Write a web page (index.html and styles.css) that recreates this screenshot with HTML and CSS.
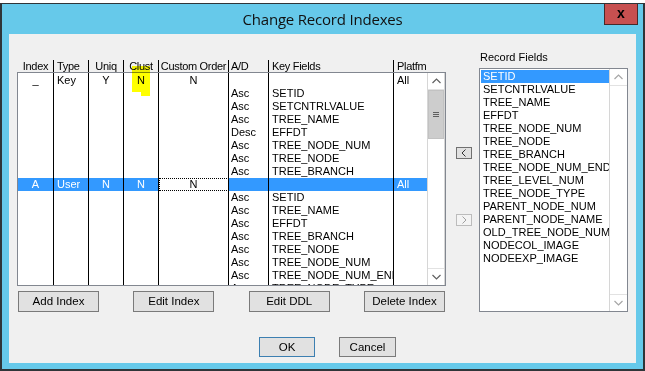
FILE: index.html
```html
<!DOCTYPE html>
<html>
<head>
<meta charset="utf-8">
<link rel="stylesheet" href="styles.css">
</head>
<body>
<div class="bgstrip"></div>
<div class="window">
  <div class="titlebar">
    <span class="title">Change Record Indexes</span>
    <div class="close">x</div>
  </div>
  <div class="content">
    <div class="main">
      <div class="leftcol">
        <div class="thead cols">
          <div class="c">Index</div><div class="l">Type</div><div class="c">Uniq</div><div class="c">Clust</div><div class="c">Custom Order</div><div class="l2">A/D</div><div class="l">Key Fields</div><div class="l last">Platfm</div>
        </div>
        <div class="tbox">
          <div class="tbody">
            <div class="row cols first"><div class="c">_</div><div class="l">Key</div><div class="c">Y</div><div class="c">N</div><div class="c">N</div><div class="l2"></div><div class="l"></div><div class="l">All</div></div>
            <div class="row cols"><div></div><div></div><div></div><div></div><div></div><div class="l2">Asc</div><div class="l">SETID</div><div></div></div>
            <div class="row cols"><div></div><div></div><div></div><div></div><div></div><div class="l2">Asc</div><div class="l">SETCNTRLVALUE</div><div></div></div>
            <div class="row cols"><div></div><div></div><div></div><div></div><div></div><div class="l2">Asc</div><div class="l">TREE_NAME</div><div></div></div>
            <div class="row cols"><div></div><div></div><div></div><div></div><div></div><div class="l2">Desc</div><div class="l">EFFDT</div><div></div></div>
            <div class="row cols"><div></div><div></div><div></div><div></div><div></div><div class="l2">Asc</div><div class="l">TREE_NODE_NUM</div><div></div></div>
            <div class="row cols"><div></div><div></div><div></div><div></div><div></div><div class="l2">Asc</div><div class="l">TREE_NODE</div><div></div></div>
            <div class="row cols"><div></div><div></div><div></div><div></div><div></div><div class="l2">Asc</div><div class="l">TREE_BRANCH</div><div></div></div>
            <div class="row cols sel"><div class="c">A</div><div class="l">User</div><div class="c">N</div><div class="c">N</div><div class="c focus">N</div><div class="l2"></div><div class="l"></div><div class="l">All</div></div>
            <div class="row cols"><div></div><div></div><div></div><div></div><div></div><div class="l2">Asc</div><div class="l">SETID</div><div></div></div>
            <div class="row cols"><div></div><div></div><div></div><div></div><div></div><div class="l2">Asc</div><div class="l">TREE_NAME</div><div></div></div>
            <div class="row cols"><div></div><div></div><div></div><div></div><div></div><div class="l2">Asc</div><div class="l">EFFDT</div><div></div></div>
            <div class="row cols"><div></div><div></div><div></div><div></div><div></div><div class="l2">Asc</div><div class="l">TREE_BRANCH</div><div></div></div>
            <div class="row cols"><div></div><div></div><div></div><div></div><div></div><div class="l2">Asc</div><div class="l">TREE_NODE</div><div></div></div>
            <div class="row cols"><div></div><div></div><div></div><div></div><div></div><div class="l2">Asc</div><div class="l">TREE_NODE_NUM</div><div></div></div>
            <div class="row cols"><div></div><div></div><div></div><div></div><div></div><div class="l2">Asc</div><div class="l">TREE_NODE_NUM_END</div><div></div></div>
            <div class="row cols"><div></div><div></div><div></div><div></div><div></div><div class="l2">Asc</div><div class="l">TREE_NODE_TYPE</div><div></div></div>
          </div>
          <div class="vscroll">
            <div class="sb-btn up"><svg width="9" height="6" viewBox="0 0 9 6"><polyline points="0.5,5 4.5,1 8.5,5" fill="none" stroke="#606060" stroke-width="1.2"/></svg></div>
            <div class="sb-thumb"><span class="grip"></span><span class="grip"></span><span class="grip"></span></div>
            <div class="sb-track"></div>
            <div class="sb-btn down"><svg width="9" height="6" viewBox="0 0 9 6"><polyline points="0.5,1 4.5,5 8.5,1" fill="none" stroke="#606060" stroke-width="1.2"/></svg></div>
          </div>
        </div>
        <div class="btnrow">
          <div class="btn">Add Index</div>
          <div class="btn">Edit Index</div>
          <div class="btn">Edit DDL</div>
          <div class="btn">Delete Index</div>
        </div>
        <div class="hl hl-a"></div>
        <div class="hl hl-b"></div>
      </div>
      <div class="midcol">
        <div class="arrowbtn"><svg width="6" height="8" viewBox="0 0 6 8"><polyline points="4.5,0.5 1,4 4.5,7.5" fill="none" stroke="#333" stroke-width="1"/></svg></div>
        <div class="arrowbtn disabled"><svg width="6" height="8" viewBox="0 0 6 8"><polyline points="1.5,0.5 5,4 1.5,7.5" fill="none" stroke="#a0a0a0" stroke-width="1"/></svg></div>
      </div>
      <div class="rightcol">
        <div class="rf-label">Record Fields</div>
        <div class="rf-box">
          <div class="rf-list">
            <div class="item sel">SETID</div>
            <div class="item">SETCNTRLVALUE</div>
            <div class="item">TREE_NAME</div>
            <div class="item">EFFDT</div>
            <div class="item">TREE_NODE_NUM</div>
            <div class="item">TREE_NODE</div>
            <div class="item">TREE_BRANCH</div>
            <div class="item">TREE_NODE_NUM_END</div>
            <div class="item">TREE_LEVEL_NUM</div>
            <div class="item">TREE_NODE_TYPE</div>
            <div class="item">PARENT_NODE_NUM</div>
            <div class="item">PARENT_NODE_NAME</div>
            <div class="item">OLD_TREE_NODE_NUM</div>
            <div class="item">NODECOL_IMAGE</div>
            <div class="item">NODEEXP_IMAGE</div>
          </div>
          <div class="vscroll rf">
            <div class="sb-btn up small"><svg width="9" height="6" viewBox="0 0 9 6"><polyline points="0.5,5 4.5,1 8.5,5" fill="none" stroke="#a6a6a6" stroke-width="1.2"/></svg></div>
            <div class="sb-track"></div>
            <div class="sb-btn down small"><svg width="9" height="6" viewBox="0 0 9 6"><polyline points="0.5,1 4.5,5 8.5,1" fill="none" stroke="#a6a6a6" stroke-width="1.2"/></svg></div>
          </div>
        </div>
      </div>
    </div>
    <div class="okrow">
      <div class="btn ok">OK</div>
      <div class="btn cancel">Cancel</div>
    </div>
  </div>
</div>
</body>
</html>
```

FILE: styles.css
```css
* { box-sizing: border-box; }
html, body { margin: 0; padding: 0; }
body {
  width: 645px;
  height: 371px;
  overflow: hidden;
  background: #ffffff;
  font-family: "Liberation Sans", Arial, sans-serif;
  font-size: 11px;
  color: #000;
}
.bgstrip {
  height: 3px;
  background: #ffffff;
}
.window {
  width: 645px;
  height: 368px;
  border: 2px solid #2f3538;
  border-top-width: 1px;
  background: #66c9ea;
  padding: 0 7px 6px 7px;
  display: flex;
  flex-direction: column;
}
.titlebar {
  position: relative;
  height: 30px;
  margin: 0 -7px;
  text-align: center;
}
.title {
  display: inline-block;
  line-height: 30px;
  font-family: "Open Sans", "Noto Sans", sans-serif;
  font-size: 15px;
  color: #111;
  letter-spacing: -0.2px;
}
.close {
  position: absolute;
  top: 0;
  right: 5px;
  width: 34px;
  height: 21px;
  background: #c75050;
  border: 1px solid #48292a;
  border-top: none;
  color: #000;
  font-weight: bold;
  font-size: 14px;
  line-height: 18px;
  text-align: center;
}
.content {
  width: 627px;
  height: 329px;
  background: #f0f0f0;
  padding-left: 8px;
}
.main {
  display: flex;
  align-items: flex-start;
}
.leftcol {
  position: relative;
  width: 429px;
  padding-top: 25px;
}
.cols {
  display: grid;
  grid-template-columns: 36px 35px 35px 35px 70px 40px 125px 33px;
}
.cols > div {
  border-right: 1px solid #000;
  white-space: nowrap;
  overflow: hidden;
}
.cols > div:last-child { border-right: none; }
.c { text-align: center; }
.l { padding-left: 3px; }
.l2 { padding-left: 2px; }
.thead {
  height: 13px;
  line-height: 13px;
  padding-left: 1px;
  color: #000;
  letter-spacing: -0.3px;
}
.thead > div {
  height: 12px;
  line-height: 12px;
  margin-top: 1px;
  overflow: visible;
}
.tbox {
  height: 214px;
  border: 1px solid #828790;
  background: #fff;
  display: flex;
  overflow: hidden;
}
.tbody {
  width: 409px;
  height: 212px;
  overflow: hidden;
}
.row {
  height: 13px;
  line-height: 13px;
}
.row.first { height: 14px; line-height: 15px; }
.row.sel > div {
  background: #3399ff;
  color: #fff;
}
.row.sel > div.focus {
  background: #fff;
  color: #000;
  outline: 1px dotted #000;
  outline-offset: -1px;
}
.vscroll {
  width: 18px;
  height: 212px;
  display: flex;
  flex-direction: column;
  background: #ffffff;
  border-left: 1px solid #d6d6d6;
  border-right: 1px solid #d6d6d6;
}
.sb-btn {
  height: 17px;
  display: flex;
  align-items: center;
  justify-content: center;
  border-bottom: 1px solid #e2e2e2;
}
.sb-btn.down {
  border-bottom: none;
  border-top: 1px solid #e2e2e2;
}
.sb-thumb {
  height: 49px;
  background: #cdcdcd;
  border: 1px solid #c2c2c2;
  display: flex;
  flex-direction: column;
  align-items: center;
  justify-content: center;
  gap: 1px;
}
.grip {
  width: 6px;
  height: 1px;
  background: #5f5f5f;
}
.sb-track { flex: 1; }
.btnrow {
  margin-top: 5px;
  padding: 0 1px;
  display: flex;
  justify-content: space-between;
}
.btn {
  width: 81px;
  height: 21px;
  background: #e1e1e1;
  border: 1px solid #7a7a7a;
  text-align: center;
  line-height: 19px;
  font-size: 11.5px;
  color: #000;
}
.hl {
  position: absolute;
  background: #ffff00;
  mix-blend-mode: multiply;
}
.hl-a { left: 115px; top: 32px; width: 18px; height: 26px; }
.hl-b { left: 124px; top: 58px; width: 9px; height: 4px; }
.midcol {
  width: 33px;
  padding-left: 10px;
  padding-top: 113px;
  display: flex;
  flex-direction: column;
}
.arrowbtn {
  width: 16px;
  height: 12px;
  background: #e1e1e1;
  border: 1px solid #707070;
  display: flex;
  align-items: center;
  justify-content: center;
}
.arrowbtn.disabled {
  margin-top: 55px;
  border-color: #bcbcbc;
  background: #f4f4f4;
}
.rightcol {
  width: 149px;
  padding-top: 17px;
}
.rf-label {
  height: 13px;
  line-height: 13px;
  padding-left: 1px;
  margin-bottom: 4px;
}
.rf-box {
  height: 244px;
  border: 1px solid #828790;
  background: #fff;
  display: flex;
}
.rf-list {
  width: 129px;
  padding: 1px 0 0 1px;
}
.item {
  height: 13px;
  line-height: 13px;
  padding-left: 2px;
  white-space: nowrap;
  overflow: hidden;
}
.item.sel {
  background: #3399ff;
  color: #fff;
}
.vscroll.rf {
  height: 242px;
  border-right: none;
}
.okrow {
  margin-top: 25px;
  padding-left: 242px;
  display: flex;
  gap: 24px;
}
.btn.ok {
  width: 56px;
  height: 20px;
  line-height: 18px;
  border-color: #3c7fb1;
}
.btn.cancel {
  width: 57px;
  height: 20px;
  line-height: 18px;
}
```
